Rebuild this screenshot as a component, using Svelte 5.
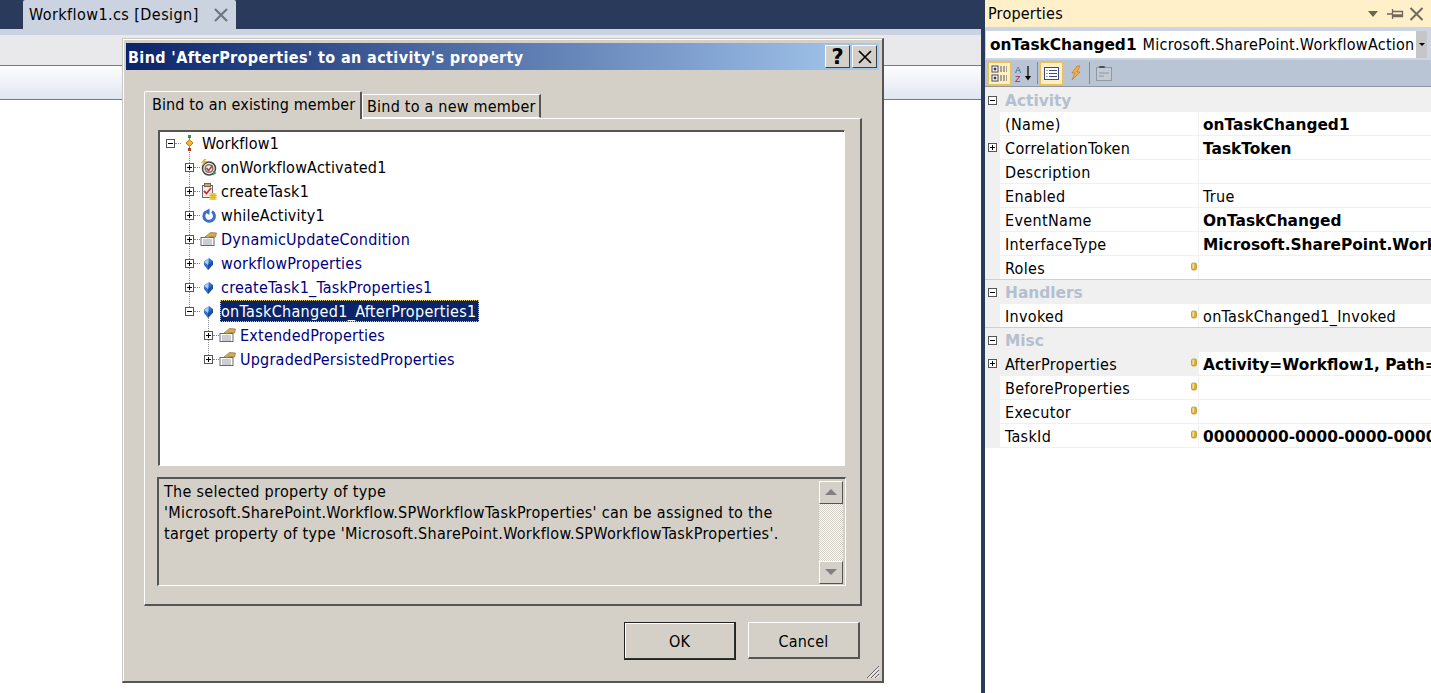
<script>
  const tree = [
    { d: 0, t: 'Workflow1', i: 'wf', exp: '-' },
    { d: 1, t: 'onWorkflowActivated1', i: 'act', exp: '+', line: true },
    { d: 1, t: 'createTask1', i: 'task', exp: '+', line: true },
    { d: 1, t: 'whileActivity1', i: 'while', exp: '+', line: true },
    { d: 1, t: 'DynamicUpdateCondition', i: 'prop', exp: '+', line: true, blue: true },
    { d: 1, t: 'workflowProperties', i: 'gem', exp: '+', line: true, blue: true },
    { d: 1, t: 'createTask1_TaskProperties1', i: 'gem', exp: '+', line: true, blue: true },
    { d: 1, t: 'onTaskChanged1_AfterProperties1', i: 'gem', exp: '-', line: true, sel: true },
    { d: 2, t: 'ExtendedProperties', i: 'prop', exp: '+', line: true, blue: true },
    { d: 2, t: 'UpgradedPersistedProperties', i: 'prop', exp: '+', line: true, blue: true }
  ];
  const groups = [
    { name: 'Activity', rows: [
      { n: '(Name)', v: 'onTaskChanged1', b: true },
      { n: 'CorrelationToken', v: 'TaskToken', b: true, exp: true },
      { n: 'Description', v: '' },
      { n: 'Enabled', v: 'True' },
      { n: 'EventName', v: 'OnTaskChanged', b: true },
      { n: 'InterfaceType', v: 'Microsoft.SharePoint.Work', b: true },
      { n: 'Roles', v: '', dot: true }
    ]},
    { name: 'Handlers', rows: [
      { n: 'Invoked', v: 'onTaskChanged1_Invoked', dot: true }
    ]},
    { name: 'Misc', rows: [
      { n: 'AfterProperties', v: 'Activity=Workflow1, Path=', b: true, dot: true, exp: true, sel: true },
      { n: 'BeforeProperties', v: '', dot: true },
      { n: 'Executor', v: '', dot: true },
      { n: 'TaskId', v: '00000000-0000-0000-0000', b: true, dot: true }
    ]}
  ];
</script>

{#snippet box(kind)}
  <svg class="boxicon" width="9" height="9" viewBox="0 0 9 9">
    <rect x=".5" y=".5" width="8" height="8" fill="#fff" stroke="#555" />
    <path d="M2 4.5h5" stroke="#000" />
    {#if kind === '+'}<path d="M4.5 2v5" stroke="#000" />{/if}
  </svg>
{/snippet}

{#snippet icon(i)}
  <svg class="ticon" width="17" height="17" viewBox="0 0 17 17">
    {#if i === 'wf'}
      <rect x="7" y="0" width="3" height="3" fill="#3f8f3f" />
      <path d="M8.5 3v11" stroke="#a08030" />
      <path d="M8.5 4.500l3.500 3.500-3.500 3.500-3.500-3.500z" fill="#f2b632" stroke="#b8801c" />
      <rect x="7" y="13" width="3" height="3" fill="#b8352b" />
    {:else if i === 'act'}
      <circle cx="9" cy="9.500" r="6.500" fill="#f1f1f1" stroke="#444" stroke-width="1.500" />
      <circle cx="9" cy="9.500" r="3.800" fill="none" stroke="#777" stroke-width="1.600" />
      <path d="M6.500 9l2 2.500 4-5" fill="none" stroke="#c0392b" stroke-width="1.600" />
      <path d="M4.500 0L1.500 3.500h2L2 7l4.500-4.500h-2L6 0z" fill="#f0c030" stroke="#b89020" stroke-width=".4" />
      <path d="M13 11.500l3.500 2.500-3.500 2.500z" fill="#4a9a4a" />
    {:else if i === 'task'}
      <rect x="2.500" y="2.500" width="10" height="12" fill="#eee" stroke="#667" />
      <rect x="4.500" y="0.500" width="6" height="3" fill="#c9a860" stroke="#765" />
      <path d="M4 8l2.500 2.500L11 5" fill="none" stroke="#c8342c" stroke-width="1.800" />
      <rect x="9.500" y="10" width="7" height="7" fill="#f6d74a" />
      <path d="M9.500 12.500h7M9.500 14.500h7M12 10v7M14 10v7" stroke="#c9a830" stroke-width=".7" />
    {:else if i === 'while'}
      <path d="M5.500 5.200a5.300 5.300 0 1 0 6.500-.6" fill="none" stroke="#3a70c8" stroke-width="3" />
      <path d="M9.500 1.500v6.500l-5.500-3.200z" fill="#3a70c8" />
    {:else if i === 'prop'}
      <rect x="1" y="6.500" width="13" height="8" fill="#fff" stroke="#667" />
      <path d="M3 9h9M3 11h9M3 13h9" stroke="#99a" />
      <path d="M5 6l5.500-4.500 6 .5-1 4-5-.5L8 7z" fill="#d2ab55" stroke="#8a7030" stroke-width=".7" />
    {:else if i === 'gem'}
      <path d="M9 3l4 3v3.500l-5 5.500-4-5v-3.500z" fill="#2f6fd0" />
      <path d="M9 3l-5 4 4 3z" fill="#a9cdf5" />
      <path d="M8 10l5-4v3.500l-5 5.500z" fill="#1d4ea0" />
    {/if}
  </svg>
{/snippet}

{#snippet cyl()}
  <svg class="cyl" width="6" height="9" viewBox="0 0 6 9">
    <rect x=".5" y="1" width="5" height="7" rx="1.500" fill="#d8b23c" stroke="#b08a20" stroke-width=".7" />
    <rect x="1.500" y="1.500" width="1.500" height="5" fill="#f4e19a" />
  </svg>
{/snippet}

<div class="app">
  <main class="doc">
    <div class="tabbar">
      <div class="doctab">
        <span>Workflow1.cs [Design]</span>
        <svg width="14" height="14" viewBox="0 0 14 14"><path d="M1 1l12 12M13 1L1 13" stroke="#6f7582" stroke-width="2.200" /></svg>
      </div>
    </div>
    <div class="strip"></div>
    <div class="toolbar"></div>
    <div class="band"></div>
  </main>

  <aside class="panel">
    <header class="ptitle">
      <span>Properties</span>
      <div class="pbtns">
        <svg width="12" height="8" viewBox="0 0 12 8"><path d="M1 1h10L6 7z" fill="#6d6550" /></svg>
        <svg width="17" height="12" viewBox="0 0 17 12"><path d="M0 6h5M5.500 3.500h10v5h-10zM5.500 1v10M5.500 7h10" fill="none" stroke="#6d6a5c" stroke-width="1.300" /></svg>
        <svg class="px" width="15" height="14" viewBox="0 0 14 14"><path d="M1 1l12 12M13 1L1 13" stroke="#6d6a5c" stroke-width="2" /></svg>
      </div>
    </header>
    <div class="pcombo">
      <div class="combo">
        <b>onTaskChanged1</b><span>Microsoft.SharePoint.WorkflowAction</span>
        <i class="cbtn"><svg width="6" height="3" viewBox="0 0 6 3"><path d="M0 0h6L3 3z" fill="#000" /></svg></i>
      </div>
    </div>
    <div class="ptools">
      <button class="tb on" aria-label="Categorized"><svg width="17" height="17" viewBox="0 0 17 17"><rect x="1" y="1" width="6" height="6" fill="#fff" stroke="#445" /><rect x="1" y="10" width="6" height="6" fill="#fff" stroke="#445" /><path d="M2.500 4h3M4 2.500v3M2.500 13h3M4 11.500v3" stroke="#000" /><path d="M9 2h7M9 4h7M9 6h7M9 11h7M9 13h7M9 15h7" stroke="#556" stroke-dasharray="2 1" /></svg></button>
      <button class="tb" aria-label="Alphabetical"><svg width="17" height="17" viewBox="0 0 17 17"><text x="0" y="8" font-size="9" font-family="Liberation Sans" fill="#3a5a9a">A</text><text x="0" y="16.500" font-size="9" font-family="Liberation Sans" fill="#a03040">Z</text><path d="M13 1v13" stroke="#000" stroke-width="1.200" /><path d="M10 11h6l-3 4.500z" fill="#000" /></svg></button>
      <i class="sep"></i>
      <button class="tb on" aria-label="Properties"><svg width="17" height="15" viewBox="0 0 17 15"><rect x="1.500" y="1.500" width="14" height="12" fill="#fff" stroke="#3b4a80" /><path d="M3.500 4.500h1M3.500 7.500h1M3.500 10.500h1M6 4.500h8M6 7.500h8M6 10.500h8" stroke="#3b4a80" /></svg></button>
      <button class="tb" aria-label="Events"><svg width="15" height="17" viewBox="0 0 15 17"><path d="M9 1L4 8h3L4 15l8-8H9l3-6z" fill="#f2b23a" stroke="#c06a30" stroke-width=".6" /></svg></button>
      <i class="sep"></i>
      <button class="tb off" aria-label="Pages"><svg width="16" height="15" viewBox="0 0 16 15"><rect x=".5" y="1.500" width="15" height="13" fill="#c5cbd4" stroke="#8f96a0" /><path d="M3 1.500V0h6v1.500M3 7h10M3 10h5" stroke="#8f96a0" /></svg></button>
    </div>
    <div class="grid">
      {#each groups as g}
        <div class="cat">
          <span class="m">{@render box('-')}</span>
          <b>{g.name}</b>
        </div>
        {#each g.rows as r, idx}
          <div class="row" class:last={idx === g.rows.length - 1}>
            <span class="m">{#if r.exp}{@render box('+')}{/if}</span>
            <span class="n" class:sel={r.sel}>{r.n}{#if r.dot}{@render cyl()}{/if}</span>
            <span class="v" class:bold={r.b}>{r.v}</span>
          </div>
        {/each}
      {/each}
    </div>
  </aside>

  <section class="dialog">
    <div class="dtitle">
      <b>Bind 'AfterProperties' to an activity's property</b>
      <div class="capbtns">
        <button class="cap">?</button>
        <button class="cap" aria-label="Close"><svg width="16" height="16" viewBox="0 0 16 16"><path d="M2 2l12 12M14 2L2 14" stroke="#000" stroke-width="1.700" /></svg></button>
      </div>
    </div>
    <div class="dbody">
      <div class="tabs">
        <span class="tab active">Bind to an existing member</span>
        <span class="tab second">Bind to a new member</span>
      </div>
      <div class="tabpanel">
        <div class="tree">
          {#each tree as n}
            <div class="node" style="padding-left:{6 + 19 * n.d}px">
              <span class="exp" class:line={n.line}>{@render box(n.exp)}</span>
              <span class="ic">{@render icon(n.i)}</span>
              <span class="lbl" class:blue={n.blue} class:sel={n.sel}>{n.t}</span>
            </div>
          {/each}
        </div>
        <div class="desc">
          <p>The selected property of type<br />'Microsoft.SharePoint.Workflow.SPWorkflowTaskProperties' can be assigned to the<br />target property of type 'Microsoft.SharePoint.Workflow.SPWorkflowTaskProperties'.</p>
          <div class="sb">
            <span class="sbtn"><svg width="12" height="7" viewBox="0 0 12 7"><path d="M6 0l6 6H0z" fill="#808080" /></svg></span>
            <span class="track"></span>
            <span class="sbtn"><svg width="12" height="7" viewBox="0 0 12 7"><path d="M0 0h12L6 6z" fill="#808080" /></svg></span>
          </div>
        </div>
      </div>
      <div class="actions">
        <button class="btn def">OK</button>
        <button class="btn">Cancel</button>
      </div>
    </div>
    <svg class="grip" width="14" height="14" viewBox="0 0 14 14"><path d="M1 13L13 1M5 13l8-8M9 13l4-4" stroke="#666" /><path d="M2.500 13L13 2.500M6.500 13L13 6.500M10.500 13L13 10.500" stroke="#fff" /></svg>
  </section>
</div>

<style>
  :global(body) { margin: 0; background: #fff; }
  * { box-sizing: border-box; }
  .app {
    position: relative;
    display: flex;
    width: 1431px;
    height: 693px;
    overflow: hidden;
    font-family: "DejaVu Sans Condensed", "DejaVu Sans", sans-serif;
    font-stretch: condensed;
    font-size: 16px;
    letter-spacing: .22px;
    color: #000;
  }
  .doc { width: 981px; flex: none; display: flex; flex-direction: column; }
  .tabbar { height: 29px; background: #2a3a5a; padding-left: 23px; }
  .doctab {
    width: 213px; height: 29px; background: #ccd3e0; border-radius: 2px 2px 0 0; letter-spacing: .43px;
    display: flex; align-items: center; justify-content: space-between; padding: 0 8px 0 6px;
  }
  .strip { height: 6px; background: #ccd3e0; }
  .toolbar { height: 30px; background: #e9e9ec; }
  .band {
    height: 35px;
    background: linear-gradient(#fdfdfe, #e0e6f0);
    border-top: 1px solid #5a7fb5; border-bottom: 1px solid #5a7fb5;
  }
  .panel {
    flex: 1; min-width: 0; display: flex; flex-direction: column;
    border-left: 4px solid #2a3a5a; background: #fff;
  }
  .ptitle {
    height: 27px; flex: none; background: #fff0c9; padding: 0 7px 0 3px;
    display: flex; align-items: center; justify-content: space-between;
  }
  .pbtns { display: flex; align-items: center; gap: 8px; }
  .px { margin-left: -3px; }
  .pcombo { height: 33px; flex: none; background: #ccd5e3; padding: 4px 4px 2px 1px; }
  .combo {
    height: 27px; background: #fff; display: flex; align-items: center; padding-left: 4px;
    white-space: nowrap; overflow: hidden; letter-spacing: .3px;
  }
  .combo b {
    font-family: "DejaVu Sans", sans-serif; font-stretch: normal; font-size: 15.4px; letter-spacing: 0;
    font-weight: 700; margin-right: 6px;
  }
  .combo span { flex: 1; min-width: 0; overflow: hidden; letter-spacing: .26px; }
  .cbtn { width: 11px; height: 27px; flex: none; background: #c6c6c6; display: flex; align-items: center; justify-content: center; }
  .cbtn svg { display: block; }
  .ptools {
    height: 27px; flex: none; background: #b9c4d5; border-bottom: 1px solid #8f96a0;
    display: flex; align-items: center; padding-left: 3px;
  }
  .tb {
    width: 23px; height: 23px; padding: 0; border: 1px solid transparent; background: transparent;
    display: flex; align-items: center; justify-content: center; margin-right: 1px;
  }
  .tb.on { background: #ffefc4; border-color: #e6c15e; }
  .tb.off { opacity: .95; }
  .sep { width: 1px; height: 22px; background: #7f8a9c; margin: 0 2px 0 1px; }
  .grid { flex: none; background: #f0f0f0; padding-top: 1px; letter-spacing: .33px; }
  .cat { height: 24px; display: flex; align-items: center; background: #f0f0f0; }
  .cat b {
    color: #b4bfd0; margin: 2px 0 0 5px; font-family: "DejaVu Sans", sans-serif; font-stretch: normal;
    font-size: 15.4px; letter-spacing: 0;
  }
  .m { width: 15px; flex: none; display: flex; align-items: center; padding-left: 3px; }
  .boxicon { display: block; }
  .row { height: 24px; display: flex; border-bottom: 1px solid #f0f0f0; }
  .row.last { border-bottom-color: #d4d0c8; }
  .row.last:last-child { border-bottom-color: #f0f0f0; }
  .n {
    width: 199px; flex: none; background: #fff; padding: 1px 1px 0 5px; display: flex; align-items: center;
    justify-content: space-between; border-right: 1px solid #f0f0f0; white-space: nowrap;
  }
  .n.sel { background: #f0f0f0; }
  .cyl { flex: none; margin-top: -3px; }
  .v {
    flex: 1; min-width: 0; background: #fff; padding: 1px 0 0 4px; display: flex; align-items: center;
    white-space: nowrap; overflow: hidden;
  }
  .v.bold {
    font-family: "DejaVu Sans", sans-serif; font-stretch: normal; font-size: 15.4px; letter-spacing: 0; font-weight: 700;
    padding-top: 2px;
  }

  .dialog {
    position: absolute; left: 122px; top: 38px; width: 762px; height: 645px;
    background: #d4d0c8; border: 1px solid #c8c8c8; border-right: 2px solid #555; border-bottom: 2px solid #555;
    box-shadow: inset 1px 1px 0 #fff; padding: 4px 3px 0 3px;
  }
  .dtitle {
    height: 27px; background: linear-gradient(90deg, #0a246a, #a6caf0);
    display: flex; align-items: center; justify-content: space-between; padding: 0 2px 0 2px;
    color: #fff; white-space: nowrap; letter-spacing: .38px;
  }
  .dtitle b { padding-top: 1px; }
  .capbtns { display: flex; gap: 2px; }
  .cap {
    width: 25px; height: 23px; padding: 0; background: #d4d0c8; color: #000;
    border: 1px solid; border-color: #fff #404040 #404040 #fff;
    font: 700 21px "DejaVu Sans", sans-serif; line-height: 20px;
    display: flex; align-items: center; justify-content: center;
  }
  .dbody { padding: 20px 0 0 18px; }
  .tabs { display: flex; align-items: flex-end; height: 28px; }
  .tab {
    height: 24px; padding: 0 4px 0 4px; display: flex; align-items: center;
    border: 1px solid #fff; border-right: 2px solid #555; border-bottom: 1px solid #fff; white-space: nowrap;
  }
  .tab.second { width: 179px; }
  .tab.active {
    height: 28px; width: 218px; padding-left: 7px; border-radius: 2px 2px 0 0; letter-spacing: .12px;
    border-bottom: none; padding-bottom: 2px; position: relative; margin-bottom: -1px; background: #d4d0c8; z-index: 1;
  }
  .tabpanel {
    width: 718px; height: 488px; border: 1px solid #fff; border-right: 2px solid #555; border-bottom: 2px solid #555;
    padding: 11px 0 0 13px;
  }
  .tree {
    width: 687px; height: 336px; background: #fff;
    border-top: 1px solid #555; border-left: 2px solid #555; border-right: 1px solid #fff; border-bottom: 1px solid #fff;
    box-shadow: inset 0 1px 0 #555, 1px 1px 0 #d4d0c8;
  }
  .node { height: 24px; display: flex; align-items: center; white-space: nowrap; }
  .exp { position: relative; width: 9px; height: 9px; flex: none; }
  .exp::before {
    content: ""; position: absolute; left: 9px; top: 4px; width: 6px; border-top: 1px dotted #888;
  }
  .exp.line::after {
    content: ""; position: absolute; left: 4px; top: -15px; height: 15px; border-left: 1px dotted #888;
  }
  .ic { width: 17px; height: 17px; margin-left: 6px; flex: none; position: relative; z-index: 1; }
  .ticon { display: block; }
  .lbl { margin-left: 3px; padding: 0 2px 0 1px; height: 22px; display: flex; align-items: center; }
  .lbl.blue { color: #000080; }
  .lbl.sel { background: #0a246a; color: #fff; outline: 1px dotted #e8c860; outline-offset: -1px; letter-spacing: .32px; }
  .desc {
    width: 689px; height: 109px; margin: 11px 0 0 -1px; display: flex; justify-content: space-between;
    border: 2px solid #555; border-right: 1px solid #fff; border-bottom: 1px solid #fff; padding: 2px 0 0 5px;
  }
  .desc p { margin: 0; line-height: 21px; white-space: nowrap; letter-spacing: .3px; }
  .sb { width: 24px; margin-right: 2px; display: flex; flex-direction: column; height: 103px; }
  .sbtn {
    height: 23px; flex: none; display: flex; align-items: center; justify-content: center;
    background: #d4d0c8; border: 1px solid; border-color: #fff #555 #555 #fff;
  }
  .track { flex: 1; background: repeating-conic-gradient(#d4d0c8 0 25%, #fff 0 50%) 0 0 / 2px 2px; }
  .actions { display: flex; gap: 12px; padding: 16px 0 0 480px; align-items: flex-start; }
  .btn {
    width: 112px; height: 37px; padding: 2px 0 0; background: #d4d0c8; font: inherit; letter-spacing: inherit; color: #000;
    border: 1px solid; border-color: #fff #555 #555 #fff; border-right-width: 2px; border-bottom-width: 2px;
  }
  .btn.def { height: 38px; outline: 1px solid #222; outline-offset: -1px; border-color: #222 #333 #333 #222; box-shadow: inset 1px 1px 0 #fff; }
  .grip { position: absolute; right: 2px; bottom: 2px; }
</style>
